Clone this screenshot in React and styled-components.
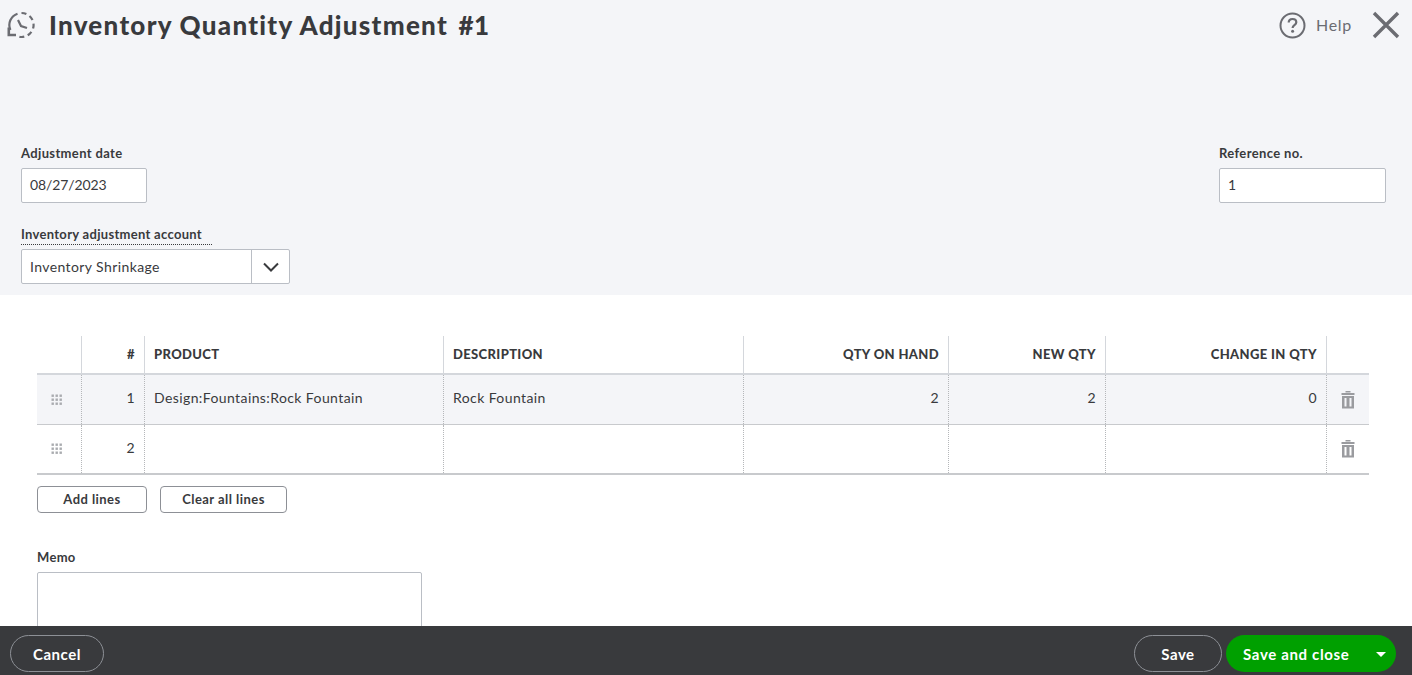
import React from "react";
import styled, { createGlobalStyle } from "styled-components";

const Global = createGlobalStyle`
  html, body { margin: 0; padding: 0; height: 100%; overflow: hidden; background: #fff; }
  body { font-family: Lato, "Open Sans", "Liberation Sans", sans-serif; color: #393a3d; }
  * { box-sizing: border-box; }
`;

const Page = styled.div`
  width: 1412px; height: 675px; display: flex; flex-direction: column; overflow: hidden;
`;
const Main = styled.div`
  flex: 1; min-height: 0; overflow: hidden; display: flex; flex-direction: column;
`;
const Top = styled.section`
  height: 295px; flex: none; background: #f4f5f8; display: flex; flex-direction: column;
`;
const TitleBar = styled.header`
  height: 146px; flex: none; display: flex; justify-content: space-between; align-items: flex-start;
  padding: 10px 12px 0 7px;
`;
const TitleGroup = styled.div`
  display: flex; align-items: center; gap: 14px; height: 32px;
`;
const Title = styled.h1`
  margin: -2px 0 0; font-size: 26px; line-height: 32px; font-weight: 900; color: #393a3d; letter-spacing: 1.27px;
  white-space: pre;
`;
const TitleNumber = styled.span`
  margin-left: 3px; letter-spacing: 0.4px;
`;
const HelpGroup = styled.div`
  display: flex; align-items: center; height: 32px; margin-top: -1px; color: #6b6c72;
`;
const HelpText = styled.span`
  font-size: 16px; margin: -2px 20px 0 10px; letter-spacing: 0.7px; color: #6b6c72;
`;
const FormRow = styled.div`
  display: flex; justify-content: space-between; padding: 0 26px 0 21px;
`;
const Field = styled.div`
  display: flex; flex-direction: column;
`;
const Label = styled.label`
  font-size: 13px; line-height: 14px; font-weight: 700; color: #393a3d; height: 22px;
  display: block; letter-spacing: 0.36px;
`;
const DottedLabel = styled(Label)`
  align-self: flex-start; height: 18px; margin-bottom: 4px; width: 191px;
  border-bottom: 1px dotted #393a3d; letter-spacing: 0.3px; white-space: nowrap;
`;
const TextInput = styled.div`
  width: ${p => p.$w}px; height: 35px; background: #fff; border: 1px solid #babec5; border-radius: 2px;
  padding: 0 8px; font-size: 14px; line-height: 31px; color: #393a3d; letter-spacing: -0.1px;
`;
const Combo = styled.div`
  margin-top: 24px; padding-left: 21px; display: flex; flex-direction: column;
`;
const ComboBox = styled.div`
  width: 269px; height: 35px; background: #fff; border: 1px solid #babec5; border-radius: 2px;
  display: flex; align-items: center; font-size: 14px; color: #393a3d; letter-spacing: 0.4px;
`;
const ComboValue = styled.span`
  flex: 1; padding-left: 8px; line-height: 33px;
`;
const ComboArrow = styled.span`
  width: 38px; height: 33px; border-left: 1px solid #babec5; display: flex; align-items: center; justify-content: center;
`;

const Body = styled.section`
  flex: 1; padding: 41px 43px 0 37px; display: flex; flex-direction: column;
`;
const COLS = "45px 63px 299px 300px 205px 157px 221px 42px";
const Row = styled.div`
  display: grid; grid-template-columns: ${COLS};
`;
const HeadRow = styled(Row)`
  height: 39px; border-bottom: 2px solid #d4d7dc;
`;
const DataRow = styled(Row)`
  height: 50px; background: ${p => p.$shade ? "#f4f5f8" : "#fff"};
  border-bottom: ${p => p.$last ? "2px solid #c8cacd" : "1px solid #c8cacd"};
`;
const HeadCell = styled.div`
  font-size: 13px; font-weight: 900; color: #393a3d; line-height: 37px; letter-spacing: 0.36px; padding: 0 9px;
  text-align: ${p => p.$right ? "right" : "left"};
  border-right: ${p => p.$noline ? "none" : "1px solid #d4d7dc"};
`;
const Cell = styled.div`
  font-size: 14px; color: #393a3d; line-height: 46px; padding: 0 9px; letter-spacing: 0.4px;
  text-align: ${p => p.$right ? "right" : "left"};
  border-right: ${p => p.$noline ? "none" : "1px dotted #b5b7ba"};
`;
const IconCell = styled(Cell)`
  display: flex; align-items: center; justify-content: center; padding: 0 ${p => p.$pr || 0}px 0 0;
`;
const ButtonRow = styled.div`
  display: flex; gap: 13px; margin-top: 11px;
`;
const OutlineButton = styled.button`
  width: ${p => p.$w}px; height: 27px; background: #fff; border: 1px solid #8d9096; border-radius: 4px;
  font: 700 13px Lato, sans-serif; color: #393a3d; padding: 0 0 2px; letter-spacing: 0.45px;
`;
const Memo = styled.div`
  margin-top: 36px; display: flex; flex-direction: column;
`;
const MemoLabel = styled.label`
  font-size: 13px; line-height: 16px; font-weight: 700; color: #393a3d; margin-bottom: 7px; letter-spacing: 0.3px;
`;
const MemoBox = styled.div`
  width: 385px; height: 90px; flex: none; border: 1px solid #babec5; border-radius: 2px; background: #fff;
`;
const Footer = styled.footer`
  height: 49px; flex: none; background: #393a3d; display: flex; align-items: flex-start; justify-content: space-between;
  padding: 9px 16px 0 10px;
`;
const FooterRight = styled.div`
  display: flex; gap: 4px;
`;
const GhostButton = styled.button`
  width: ${p => p.$w}px; height: 37px; border-radius: 19px; border: 1px solid #8d9096; background: transparent;
  color: #fff; font: 700 15px Lato, sans-serif; padding: 0; letter-spacing: 0.5px;
`;
const SaveClose = styled.button`
  width: 170px; height: 37px; border-radius: 19px; border: 0; background: #00a000; color: #fff;
  font: 700 15px Lato, sans-serif; padding: 0 10px 0 17px; display: flex; align-items: center; justify-content: space-between;
  letter-spacing: 0.66px;
`;
const Caret = styled.span`
  width: 0; height: 0; border-left: 5px solid transparent; border-right: 5px solid transparent; border-top: 5px solid #fff;
  margin-top: 2px;
`;

const HistoryIcon = () => (
  <svg width="28" height="28" viewBox="0 0 28 28" fill="none" stroke="#6b6c72" strokeWidth="2.2" style={{ marginTop: -2 }}>
    <path d="M10.5 2.7A12 12 0 0 0 3.4 19" />
    <path d="M14.5 2A12 12 0 1 1 12.4 25.8" strokeDasharray="5 3.7" />
    <path d="M11 9l3 6 6 2" />
    <path d="M1.8 16.5V24H9" strokeWidth="2.6" />
  </svg>
);
const HelpIcon = () => (
  <svg width="27" height="27" viewBox="0 0 27 27" fill="none">
    <circle cx="13.5" cy="13.5" r="12" stroke="#6b6c72" strokeWidth="2" />
    <path d="M9.7 10.6c0-2.2 1.6-3.6 3.8-3.6s3.8 1.4 3.8 3.3c0 3-3.7 2.8-3.7 5.6" stroke="#6b6c72" strokeWidth="2.2" />
    <circle cx="13.6" cy="19.2" r="1.5" fill="#6b6c72" />
  </svg>
);
const CloseIcon = () => (
  <svg width="28" height="28" viewBox="0 0 28 28" fill="none" stroke="#6b6c72" strokeWidth="3.4">
    <path d="M2 2l24 24M26 2L2 26" />
  </svg>
);
const Chevron = () => (
  <svg width="16" height="10" viewBox="0 0 16 10" fill="none" stroke="#393a3d" strokeWidth="2">
    <path d="M1 1.5l7 7 7-7" />
  </svg>
);
const Grip = () => (
  <svg width="12" height="12" viewBox="0 0 12 12" fill="#a9abaf">
    {[1, 5, 9].flatMap(y => [1, 5, 9].map(x => <rect key={x + "-" + y} x={x - 0.5} y={y - 0.5} width="2.4" height="2.4" />))}
  </svg>
);
const Trash = () => (
  <svg width="14" height="18" viewBox="0 0 14 18" fill="#9a9b9f">
    <rect x="4.5" y="0" width="5" height="1.5" />
    <rect x="0.5" y="2" width="13" height="2" />
    <path d="M1 5h12v12.5H1zM3.5 7v8.5h2V7zM8.5 7v8.5h2V7z" fillRule="evenodd" />
  </svg>
);

const heads = [
  ["", false], ["#", true], ["PRODUCT", false], ["DESCRIPTION", false],
  ["QTY ON HAND", true], ["NEW QTY", true], ["CHANGE IN QTY", true],
];
const rows = [
  { n: "1", product: "Design:Fountains:Rock Fountain", desc: "Rock Fountain", hand: "2", qty: "2", change: "0", shade: true },
  { n: "2", product: "", desc: "", hand: "", qty: "", change: "", last: true },
];

export default function App() {
  return (
    <Page>
      <Global />
      <Main>
        <Top>
          <TitleBar>
            <TitleGroup>
              <HistoryIcon />
              <Title>Inventory Quantity Adjustment <TitleNumber>#1</TitleNumber></Title>
            </TitleGroup>
            <HelpGroup>
              <HelpIcon />
              <HelpText>Help</HelpText>
              <CloseIcon />
            </HelpGroup>
          </TitleBar>
          <FormRow>
            <Field>
              <Label>Adjustment date</Label>
              <TextInput $w={126}>08/27/2023</TextInput>
            </Field>
            <Field>
              <Label>Reference no.</Label>
              <TextInput $w={167}>1</TextInput>
            </Field>
          </FormRow>
          <Combo>
            <DottedLabel>Inventory adjustment account</DottedLabel>
            <ComboBox>
              <ComboValue>Inventory Shrinkage</ComboValue>
              <ComboArrow><Chevron /></ComboArrow>
            </ComboBox>
          </Combo>
        </Top>
        <Body>
          <HeadRow>
            {heads.map(([t, r], i) => <HeadCell key={i} $right={r}>{t}</HeadCell>)}
            <HeadCell $noline />
          </HeadRow>
          {rows.map(r => (
            <DataRow key={r.n} $shade={r.shade} $last={r.last}>
              <IconCell $pr={4}><Grip /></IconCell>
              <Cell $right>{r.n}</Cell>
              <Cell>{r.product}</Cell>
              <Cell>{r.desc}</Cell>
              <Cell $right>{r.hand}</Cell>
              <Cell $right>{r.qty}</Cell>
              <Cell $right>{r.change}</Cell>
              <IconCell $noline><Trash /></IconCell>
            </DataRow>
          ))}
          <ButtonRow>
            <OutlineButton $w={110}>Add lines</OutlineButton>
            <OutlineButton $w={127}>Clear all lines</OutlineButton>
          </ButtonRow>
          <Memo>
            <MemoLabel>Memo</MemoLabel>
            <MemoBox />
          </Memo>
        </Body>
      </Main>
      <Footer>
        <GhostButton $w={94}>Cancel</GhostButton>
        <FooterRight>
          <GhostButton $w={88}>Save</GhostButton>
          <SaveClose>
            <span>Save and close</span>
            <Caret />
          </SaveClose>
        </FooterRight>
      </Footer>
    </Page>
  );
}
